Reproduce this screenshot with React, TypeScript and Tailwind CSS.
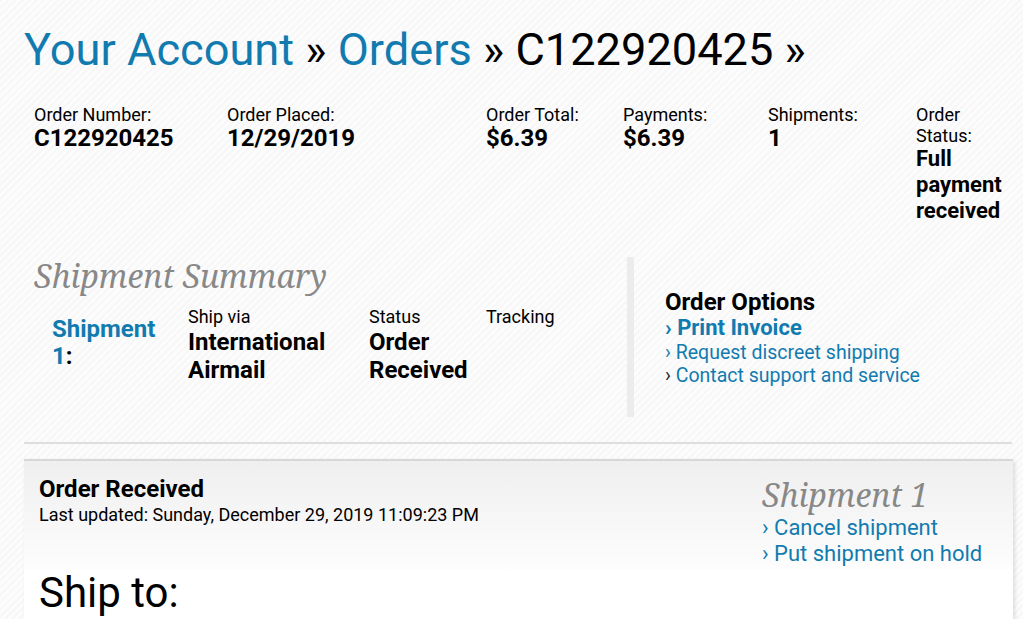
import React from "react";

const link = "text-[#117bb0]";

export default function App() {
  return (
    <div className="min-h-screen w-full bg-[repeating-linear-gradient(135deg,#f7f7f7_0px,#f7f7f7_2px,#fcfcfc_2px,#fcfcfc_5px)] font-['Roboto',sans-serif] text-black">
      <div className="px-6">
        <h1 className="pt-[24px] text-[45.2px] leading-[52px] font-normal">
          <span className={link}>Your Account</span> » <span className={link}>Orders</span> » C122920425 »
        </h1>

        <div className="mt-[28px] grid grid-cols-[193px_259px_137px_145px_148px_96px] pl-[10px]">
          <Info label="Order Number:" value="C122920425" />
          <Info label="Order Placed:" value="12/29/2019" />
          <Info label="Order Total:" value="$6.39" />
          <Info label="Payments:" value="$6.39" />
          <Info label="Shipments:" value="1" />
          <div className="pr-2">
            <div className="text-[18px] leading-[21px]">Order Status:</div>
            <div className="text-[22px] leading-[26px] font-bold">Full payment received</div>
          </div>
        </div>

        <div className="mt-[33px] flex">
          <div className="w-[603px] shrink-0">
            <h2 className="pl-[10px] font-['Noto_Serif','DejaVu_Serif',serif] italic text-[#888] text-[32px] leading-[38px]">
              Shipment Summary
            </h2>
            <div className="mt-[11px] flex pl-[28px]">
              <div className="w-[136px] pt-[10px] text-[24px] leading-[27px] font-bold">
                <span className={link}>Shipment</span>
                <br />
                <span className={link}>1</span>:
              </div>
              <div className="w-[181px]">
                <div className="text-[18px] leading-[22px]">Ship via</div>
                <div className="text-[24px] leading-[28px] font-bold">International<br />Airmail</div>
              </div>
              <div className="w-[117px]">
                <div className="text-[18px] leading-[22px]">Status</div>
                <div className="text-[24px] leading-[28px] font-bold">Order<br />Received</div>
              </div>
              <div>
                <div className="text-[18px] leading-[22px]">Tracking</div>
              </div>
            </div>
          </div>
          <div className="h-[160px] border-l-[7px] border-[#ececec] pl-[31px] pt-[32px]">
            <div className="text-[24px] leading-[26px] font-bold">Order Options</div>
            <div className="text-[22px] leading-[26px] font-bold">
              <span className={link}>›</span> <span className={link}>Print Invoice</span>
            </div>
            <div className="text-[19.5px] leading-[23px]">
              <span className={link}>› Request discreet shipping</span>
            </div>
            <div className="text-[19.5px] leading-[23px]">
              <span className="text-[#222]">›</span> <span className={link}>Contact support and service</span>
            </div>
          </div>
        </div>

        <div className="mt-[25px] h-[2px] w-[988px] bg-[#dedede]" />

        <div className="mt-[15px] w-[989px] border-t-2 border-[#d8d8d8] shadow-[2px_2px_4px_rgba(0,0,0,0.12)] bg-white">
          <div className="flex items-start justify-between bg-gradient-to-b from-[#efefef] to-[#fdfdfd] pl-[15px] pr-[10px] pt-[14px] pb-[2px]">
            <div>
              <div className="text-[24px] leading-[29px] font-bold">Order Received</div>
              <div className="text-[18px] leading-[21px]">Last updated: Sunday, December 29, 2019 11:09:23 PM</div>
            </div>
            <div className="w-[241px]">
              <div className="font-['Noto_Serif','DejaVu_Serif',serif] italic text-[#888] text-[32px] leading-[40px]">Shipment 1</div>
              <div className="text-[22px] leading-[26px]"><span className={link}>› Cancel shipment</span></div>
              <div className="text-[22px] leading-[26px]"><span className={link}>› Put shipment on hold</span></div>
            </div>
          </div>
          <div className="pl-[15px] text-[42px] leading-[48px]">Ship to:</div>
          <div className="h-[40px]" />
        </div>
      </div>
    </div>
  );
}

function Info({ label, value }: { label: string; value: string }) {
  return (
    <div className="pr-2">
      <div className="text-[18px] leading-[21px]">{label}</div>
      <div className="text-[24px] leading-[26px] font-bold">{value}</div>
    </div>
  );
}
